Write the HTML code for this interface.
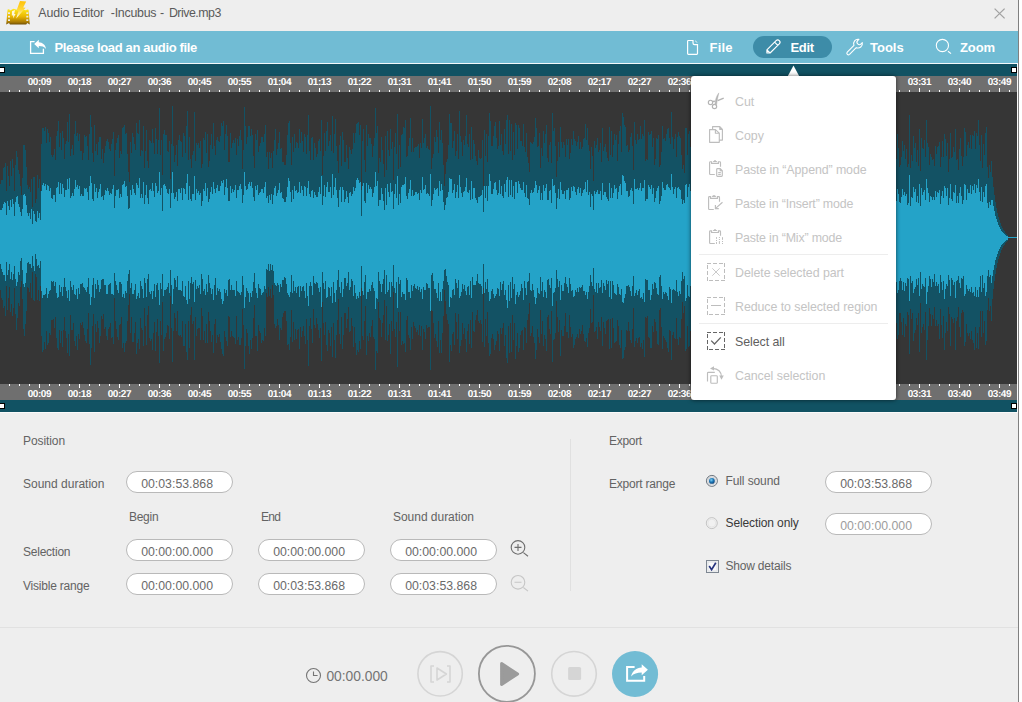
<!DOCTYPE html>
<html><head><meta charset="utf-8"><title>Audio Editor</title>
<style>
*{box-sizing:border-box;margin:0;padding:0}
html,body{width:1022px;height:702px;overflow:hidden;background:#fff;font-family:"Liberation Sans",sans-serif;}
#win{position:absolute;left:0;top:0;width:1018px;height:702px;background:#eee;overflow:hidden}
#edge{position:absolute;left:1018px;top:0;width:1px;height:702px;background:#808080}
.abs{position:absolute}
svg{position:absolute;overflow:visible}
.tt{position:absolute;top:5px;font-size:12.4px;line-height:16px;color:#5a5a5a;white-space:pre}
#toolbar{position:absolute;left:0;top:31px;width:1018px;height:32px;background:#71bcd4}
#tbline{position:absolute;left:0;top:63px;width:1018px;height:1px;background:#f3f9fb}
.tb{position:absolute;color:#fff;font-weight:bold;font-size:13px;line-height:16px;white-space:pre;top:40px}
#pill{position:absolute;left:753px;top:36px;width:79px;height:22px;border-radius:11px;background:#3d8ca8}
#panel{position:absolute;left:0;top:64px;width:1017px;height:348px;background:#115263}
#panelr{position:absolute;left:1017px;top:63px;width:1px;height:350px;background:#fafafa}
#panelb{position:absolute;left:0;top:412px;width:1018px;height:1px;background:#fafafa}
.ruler{position:absolute;left:0;width:1017px;height:16px;background-color:#6f6f6f;overflow:hidden}
#r1{top:12px;background-image:linear-gradient(90deg,transparent 39px,#fff 39px),linear-gradient(90deg,transparent 9px,#fff 9px);background-size:40px 4px,10px 2px;background-repeat:repeat-x;background-position:0 bottom,0 bottom}
#r2{top:320px;background-image:linear-gradient(90deg,transparent 39px,#fff 39px),linear-gradient(90deg,transparent 9px,#fff 9px);background-size:40px 4px,10px 2px;background-repeat:repeat-x;background-position:0 top,0 top}
.rl{position:absolute;width:40px;text-align:center;color:#fff;font-weight:bold;font-size:10px;line-height:10px;letter-spacing:-0.45px;text-rendering:geometricPrecision}
#r1 .rl{top:2px}
#r2 .rl{top:6px}
#wave{position:absolute;left:0;top:28px;width:1017px;height:292px;background:#363636}
.hd{position:absolute;width:6px;height:6px;background:#fff;border:1px solid #000}
#menu{position:absolute;left:691px;top:76px;width:205px;height:324px;background:#fff;border-radius:3px;box-shadow:0 0 4px rgba(0,0,0,.6)}
.mi{position:absolute;left:735px;font-size:12.4px;line-height:16px;color:#c4c4c4;white-space:pre}
.mi.on{color:#5e5e5e}
.sep{position:absolute;left:699px;width:189px;height:1px;background:#ededed}
.lb{position:absolute;font-size:12px;line-height:16px;color:#636363;white-space:pre}
.inp{position:absolute;width:107px;height:22px;border:1px solid #b9b9b9;border-radius:11px;background:#fff;font-size:12.3px;line-height:20px;text-align:left;color:#6a6a6a;padding:2px 0 0 14.2px;white-space:pre}
#vdiv{position:absolute;left:570px;top:439px;width:1px;height:152px;background:#e0e0e0}
#hdiv{position:absolute;left:0;top:627px;width:1018px;height:1px;background:#e1e1e1}
.g{fill:none;stroke:#bdbdbd;stroke-width:1.15}
</style></head><body>
<div id="win">
<!-- title bar -->
<svg style="left:0;top:0" width="40" height="30" viewBox="0 0 40 30">
<defs>
<linearGradient id="gold" x1="0" y1="0" x2="0" y2="1"><stop offset="0" stop-color="#ffea20"/><stop offset=".5" stop-color="#e9b602"/><stop offset=".85" stop-color="#a87a05"/><stop offset="1" stop-color="#6e4e04"/></linearGradient>
<linearGradient id="bolt" x1="0" y1="0" x2="0" y2="1"><stop offset="0" stop-color="#ffc107"/><stop offset=".5" stop-color="#ffd83a"/><stop offset="1" stop-color="#fffdf0"/></linearGradient>
</defs>
<path d="M7.6,9.6 L9.2,9.3 L10,10.4 L13.5,8.7 L17,9.7 L21,9.2 L26,10.3 L27.2,9.4 L28.6,9.7 L29.8,24.4 L27.2,23 L26.2,24.5 L10,24.5 L9,23 L6.2,24.4 Z" fill="url(#gold)"/>
<path d="M20,1 L26.2,1.4 L23.2,7.4 L25.6,7.8 L16.2,18.4 L18.6,10.6 L16.6,10.2 Z" fill="url(#bolt)"/>
<path d="M12,11.2 L15,10 L14.2,14 L15.6,14 L13,18.6 L13.3,15.6 L11.8,15.6 Z" fill="#fff" opacity=".85"/>
<g fill="#ececec"><rect x="8" y="12.3" width="2" height="1.7"/><rect x="8" y="15.8" width="2" height="1.7"/><rect x="8" y="19.3" width="2" height="1.7"/><rect x="26.3" y="12.3" width="2" height="1.7"/><rect x="26.3" y="15.8" width="2" height="1.7"/><rect x="26.3" y="19.3" width="2" height="1.7"/></g>
</svg>
<div class="tt" style="left:38.3px;letter-spacing:-0.151px">Audio Editor</div><div class="tt" style="left:110.8px;letter-spacing:-0.266px">-Incubus</div><div class="tt" style="left:160.1px;letter-spacing:0.359px">-</div><div class="tt" style="left:168.9px;letter-spacing:-0.508px">Drive.mp3</div>
<svg style="left:985px;top:2px" width="30" height="26" viewBox="985 2 30 26"><path d="M994.6,8.6 L1004.6,18.4 M1004.6,8.6 L994.6,18.4" stroke="#a2a2a2" stroke-width="1.3" fill="none"/></svg>

<!-- toolbar -->
<div id="toolbar"></div>
<div id="pill"></div>
<svg style="left:0;top:31px" width="1018" height="32" viewBox="0 31 1018 32" fill="none" stroke="#fff" stroke-width="1.2">
 <!-- load -->
 <path d="M34.6,41.6 H30.6 V53.4 H43.4 V48.8" stroke-width="1.3"/>
 <path d="M34.2,44 L38.8,39.8 V42.2 C42.6,42.4 45.6,44.8 46,49 C44.2,46.6 42,46 38.8,46 V48.2 Z" fill="#fff" stroke="none"/>
 <!-- file -->
 <path d="M688.4,40.5 H693 V43 Q693,44.6 694.6,44.6 H697.5 V53.6 Q697.5,54.4 696.7,54.4 H688.4 Q687.6,54.4 687.6,53.6 V41.3 Q687.6,40.5 688.4,40.5 Z"/>
 <path d="M695,40.1 Q695.2,42.8 697.9,43 Z" fill="#fff" stroke="none"/>
 <!-- pencil -->
 <path d="M766.9,53 L766.9,49.8 L776.1,40.6 A2.26,2.26 0 0 1 779.3,43.8 L770.1,53 Z M766.9,49.8 L770.1,53 M774.6,42.1 L777.8,45.3" stroke-width="1.15" stroke-linejoin="round"/>
 <!-- wrench -->
 <path d="M858.9,39.3 L857.7,40.5 A2.4,2.4 0 0 0 861.1,43.9 L862.3,42.7 A4.4,4.4 0 0 1 856.23,47.63 L849.53,54.33 A1.6,1.6 0 0 1 847.27,52.07 L853.97,45.37 A4.4,4.4 0 0 1 858.9,39.3 Z" stroke-width="1.1" stroke-linejoin="round"/>
 <!-- zoom -->
 <circle cx="942.4" cy="45.5" r="6.1" stroke-width="1.1"/><path d="M948,51.2 L951,53.6" stroke-width="1.2"/>
</svg>
<div class="tb" style="left:54.5px;letter-spacing:-0.34px">Please load an audio file</div>
<div class="tb" style="left:709.5px;letter-spacing:0.2px">File</div>
<div class="tb" style="left:790.5px;letter-spacing:-0.3px">Edit</div>
<div class="tb" style="left:870px">Tools</div>
<div class="tb" style="left:960px;letter-spacing:-0.1px">Zoom</div>
<div id="tbline"></div>

<!-- wave panel -->
<div id="panel">
 <div class="ruler" id="r1"><div class="rl" style="left:19.4px">00:09</div><div class="rl" style="left:59.4px">00:18</div><div class="rl" style="left:99.4px">00:27</div><div class="rl" style="left:139.4px">00:36</div><div class="rl" style="left:179.4px">00:45</div><div class="rl" style="left:219.4px">00:55</div><div class="rl" style="left:259.4px">01:04</div><div class="rl" style="left:299.4px">01:13</div><div class="rl" style="left:339.4px">01:22</div><div class="rl" style="left:379.4px">01:31</div><div class="rl" style="left:419.4px">01:41</div><div class="rl" style="left:459.4px">01:50</div><div class="rl" style="left:499.4px">01:59</div><div class="rl" style="left:539.4px">02:08</div><div class="rl" style="left:579.4px">02:17</div><div class="rl" style="left:619.4px">02:27</div><div class="rl" style="left:659.4px">02:36</div><div class="rl" style="left:699.4px">02:45</div><div class="rl" style="left:739.4px">02:54</div><div class="rl" style="left:779.4px">03:03</div><div class="rl" style="left:819.4px">03:13</div><div class="rl" style="left:859.4px">03:22</div><div class="rl" style="left:899.4px">03:31</div><div class="rl" style="left:939.4px">03:40</div><div class="rl" style="left:979.4px">03:49</div></div>
 <div id="wave"><svg width="1017" height="292" viewBox="0 0 1017 292" shape-rendering="crispEdges" style="left:0;top:0"><path d="M0,146V92H1V88H2H3V76H4V75H5V71H6V99H7V74H8V84H9V94H10V69H11V84H12V67H13V76H14V99H15V73H16V59H17V65H18V78H19V82H20V94H21V103H22V86H23V53H24H25V58H26V75H27V93H28V97H29V95H30V100H31V87H32V115H33V85H34H35V111H36V107H37V83H38V96H39V87H40V99H41V52H42V36H43H44V39H45V35H46V51H47V37H48V41H49V50H50V45H51V63H52V65H53V63H54V57H55V68H56V44H57V39H58V29H59V55H60V41H61V58H62V39H63V46H64V67H65V52H66V49H67V30H68V50H69V22H70V64H71V57H72V53H73V63H74V42H75V29H76V44H77V41H78V49H79V42H80V59H81H82V68H83V61H84V43H85V45H86V44H87V54H88V68H89V42H90V23H91V35H92V61H93V70H94V33H95V59H96V52H97V63H98V50H99V45H100H101V67H102V57H103V71H104V61H105V54H106V49H107V47H108V50H109V57H110V59H111V52H112V47H113V40H114V84H115V58H116V51H117V46H118V43H119V66H120V59H121V62H122V36H123V35H124V33H125V42H126V41H127V62H128V80H129V90H130V50H131V61H132V41H133V45H134V52H135V58H136V31H137V41H138V42H139V28H140V64H141V58H142V59H143V34H144V76H145V59H146V38H147V69H148V76H149V48H150V49H151V51H152V37H153V51H154V62H155V36H156V47H157V62H158V48H159V16H160V63H161V48H162V83H163V42H164V38H165V43H166H167V59H168V60H169V49H170V87H171V52H172V14H173V54H174V70H175V63H176V53H177V74H178V48H179V43H180V49H181V50H182V65H183V41H184V44H185V61H186V34H187V19H188V68H189V45H190V67H191V76H192V63H193V59H194V20H195V69H196V51H197V53H198V51H199V56H200V49H201V76H202V72H203V46H204V48H205V40H206V61H207V42H208V75H209V69H210V53H211V42H212V57H213V31H214V54H215V63H216V48H217V45H218V49H219V50H220V44H221V31H222V34H223V29H224V58H225V42H226V33H227V44H228V70H229H230V41H231V56H232V51H233V48H234V51H235V46H236V63H237V47H238V54H239V44H240V38H241V48H242V77H243V58H244V15H245V34H246V52H247V45H248V34H249H250V44H251V37H252V43H253V64H254V76H255V42H256V48H257V38H258V60H259V54H260V51H261V45H262H263V50H264V42H265V33H266V65H267V60H268V77H269V60H270V66H271V61H272V76H273V59H274V48H275V37H276V63H277V57H278V51H279V40H280V57H281V56H282V70H283H284V73H285H286V63H287V43H288V31H289V29H290V51H291V73H292V45H293V60H294V42H295V56H296V50H297V51H298V56H299V37H300V51H301V40H302V49H303V60H304V42H305V45H306V62H307V43H308V23H309V59H310V68H311V46H312V45H313V68H314V51H315V56H316V65H317V62H318V49H319V47H320V59H321V28H322V83H323V64H324V41H325V59H326V39H327V30H328V54H329V49H330V43H331V59H332V24H333V61H334V42H335V27H336V54H337V69H338V81H339V53H340V44H341V74H342V40H343V48H344V70H345H346V53H347V66H348V77H349V55H350V58H351V62H352V57H353V41H354V51H355V41H356V32H357V31H358V30H359V43H360V33H361V98H362V49H363V37H364V68H365V80H366V33H367V54H368V42H369V46H370H371V52H372V65H373V54H374V46H375V16H376V41H377V34H378V81H379V66H380V70H381V45H382V58H383V72H384V85H385V44H386V78H387V39H388V58H389V64H390V37H391V57H392V50H393V88H394V55H395V41H396V62H397V22H398V77H399V53H400V75H401V43H402V42H403V35H404V36H405V28H406V65H407V64H408V54H409V46H410V26H411V60H412V46H413V60H414V56H415V55H416H417V54H418V52H419V66H420V51H421V56H422V27H423V51H424V46H425V42H426V56H427V54H428V57H429V58H430V14H431V77H432V66H433V62H434V45H435V50H436V38H437V45H438V61H439V30H440V48H441V38H442V51H443V73H444V94H445V82H446V70H447V67H448V53H449V22H450V31H451H452V56H453V49H454V39H455V64H456V59H457V42H458V67H459V19H460V44H461V50H462V64H463V48H464V53H465V44H466V23H467V52H468V55H469V42H470V68H471V35H472V67H473V48H474V52H475V64H476V69H477V73H478V58H479V66H480V67H481V66H482V48H483V94H484V38H485V64H486V42H487V70H488V44H489V21H490V29H491V54H492H493V44H494V34H495V30H496V46H497V57H498V54H499V29H500V53H501V42H502V59H503V63H504V37H505V52H506V28H507V23H508V62H509V28H510V59H511V32H512V68H513V40H514V63H515V31H516V33H517V57H518V33H519V36H520V49H521H522V54H523V32H524V55H525V60H526V41H527V65H528V71H529V80H530V50H531V51H532V52H533V50H534V45H535V26H536V36H537V55H538V54H539V41H540V76H541V56H542V64H543V39H544V51H545V42H546V33H547V66H548V70H549V53H550V50H551V71H552V21H553V39H554V36H555V54H556V85H557V69H558V50H559V65H560V35H561V50H562V56H563V50H564V53H565V65H566V47H567V53H568V47H569V67H570V61H571V47H572V53H573V39H574V47H575V49H576V54H577V50H578V44H579V57H580V50H581V57H582V55H583V47H584V46H585V32H586V48H587V36H588V53H589V59H590V77H591V55H592V64H593V89H594V49H595V56H596V53H597V46H598V60H599V58H600V51H601V70H602V36H603V59H604V55H605V52H606V60H607V66H608V69H609V35H610V63H611V39H612V65H613V53H614V42H615V48H616V43H617V69H618V52H619V39H620V34H621V60H622V21H623V25H624V33H625V35H626V54H627V53H628V60H629V58H630V45H631V41H632V54H633V78H634V30H635V48H636V52H637V42H638V48H639V47H640V34H641V47H642V42H643V44H644V28H645V69H646V67H647V68H648V40H649V43H650V42H651V39H652V55H653V46H654V73H655V67H656V46H657V47H658V43H659V75H660V73H661V60H662V34H663V47H664V46H665V49H666V42H667V37H668V36H669V46H670V52H671V20H672V45H673V57H674V47H675V42H676V65H677V45H678V40H679V44H680V46H681V63H682V77H683V73H684V81H685V36H686H687V63H688V42H689V39H690V55H691V43H692V32H693V41H694V46H695V55H696V46H697V65H698V75H699V29H700V21H701V46H702V31H703V46H704V49H705V69H706V52H707V42H708V23H709V57H710V63H711V86H712V68H713V48H714V32H715V62H716V59H717V43H718V73H719V52H720V62H721V40H722V41H723V74H724V71H725V49H726V53H727V29H728V53H729V43H730V33H731V64H732V85H733V79H734V68H735V36H736V47H737V46H738V52H739V51H740V62H741V53H742V56H743V68H744V48H745V47H746V53H747V45H748V49H749V86H750V62H751V53H752V87H753V63H754V68H755V46H756V47H757V43H758V35H759V43H760V75H761V79H762V43H763V48H764V42H765V69H766V49H767V66H768V42H769V48H770V50H771V58H772V51H773V28H774V56H775V81H776V65H777V63H778V49H779V87H780V61H781V74H782V80H783V64H784V38H785V33H786V43H787V44H788V61H789V50H790V62H791V39H792V29H793V50H794V44H795V63H796V52H797V39H798V50H799V42H800V62H801V46H802H803V56H804V66H805V45H806V46H807V55H808V53H809V44H810V34H811V44H812V82H813V54H814V35H815V37H816V40H817V54H818V46H819V45H820V38H821V43H822V32H823V41H824V51H825V37H826V32H827V42H828V64H829V50H830V58H831V63H832V47H833V57H834V18H835V43H836V44H837V49H838V43H839V62H840V20H841V66H842V65H843V38H844V62H845V77H846V58H847V59H848V40H849V65H850V30H851V39H852V56H853V43H854V49H855V34H856V38H857V69H858V67H859V49H860V69H861V35H862V50H863V43H864V64H865V65H866V58H867V50H868V45H869V33H870V63H871V53H872V73H873V52H874V33H875V42H876V46H877V47H878V62H879V79H880V46H881V51H882V49H883V55H884V34H885V44H886V47H887V45H888V68H889V42H890V71H891V58H892V71H893V75H894V44H895V50H896V67H897V42H898V56H899V75H900V73H901V65H902V49H903V59H904V53H905V67H906V57H907V75H908V72H909V23H910V76H911V63H912V69H913V44H914V56H915V51H916V70H917V58H918V74H919V37H920V79H921V46H922V56H923V57H924V48H925V65H926V28H927V51H928V55H929V73H930V62H931V65H932V68H933V67H934V74H935V54H936V62H937V55H938V54H939V50H940V75H941V65H942V49H943V65H944V42H945V47H946V64H947V51H948V80H949V67H950V41H951V66H952V65H953V55H954V60H955V37H956V68H957V67H958V78H959V57H960V46H961V64H962V74H963V65H964V36H965V40H966V64H967V53H968V50H969V56H970V43H971V57H972V43H973V44H974V39H975V57H976V41H977V44H978V28H979V53H980V69H981V43H982V76H983V52H984V63H985V41H986V35H987V75H988V86H989V73H990V80H991V69H992V85H993V95H994V103H995V110H996V116H997V121H998V125H999V128H1000V131H1001V134H1002V136H1003V138H1004V139H1005V141H1006V142H1007V143H1008V146H1009H1010H1011H1012H1013H1014H1015H1016H1017V146V146H1016H1015H1014H1013H1012H1011H1010H1009H1008V149H1007V150H1006V151H1005V153H1004V154H1003V156H1002V158H1001V161H1000V164H999V167H998V171H997V176H996V182H995V189H994V197H993V207H992V229H991V214H990V219H989V206H988V218H987V249H986V253H985V229H984V241H983V219H982V245H981V219H980V235H979V257H978V241H977V256H976V235H975V258H974V251H973V248H972V239H971V247H970V241H969V244H968V241H967V232H966V250H965V254H964V220H963V218H962V221H961V245H960V235H959V215H958V225H957V229H956V258H955V226H954V231H953V227H952V225H951V254H950V222H949V215H948V239H947V230H946V241H945V258H944V224H943V246H942V233H941V217H940V247H939V232H938V234H937V228H936V234H935V215H934V227H933V223H932V234H931V222H930V216H929V234H928V248H927V268H926V220H925V238H924V232H923V235H922V241H921V211H920V260H919V221H918V233H917V226H916V238H915V241H914V249H913V221H912V227H911V217H910V262H909V223H908V220H907V234H906V232H905V245H904V226H903V243H902V230H901V221H900H899V243H898V247H897V231H896V241H895V252H894V222H893H892V236H891V218H890V242H889V226H888V241H887V246H886V251H885H884V246H883V244H882V247H881V249H880V214H879V237H878V249H877V245H876V251H875V253H874V239H873V214H872V232H871V228H870V265H869V253H868V236H867V233H866V227H865V233H864V251H863V242H862V265H861V228H860V245H859V226H858V221H857V260H856V262H855V237H854V250H853V237H852V256H851V262H850V235H849V253H848V230H847V231H846V216H845V231H844V256H843V226H842V225H841V271H840V228H839V248H838V242H837V243H836H835V267H834V230H833V240H832V227H831V232H830V238H829V232H828V253H827V257H826V262H825V245H824V253H823V256H822V250H821V253H820V242H819V248H818V237H817V246H816V251H815V254H814V239H813V211H812V243H811V268H810V247H809V244H808V241H807V254H806V244H805V227H804V239H803V252H802V251H801V232H800V260H799V247H798V251H797V236H796V229H795V246H794V248H793V259H792V252H791V226H790V247H789V229H788V244H787V248H786V258H785V254H784V227H783V212H782V215H781V228H780V207H779V242H778V235H777V226H776V215H775V241H774V262H773V247H772V233H771V241H770V248H769V250H768V223H767V240H766V221H765V246H764V247H763V254H762V215H761V216H760V246H759V251H758V250H757V249H756V246H755V228H754V230H753V209H752V247H751V235H750V203H749V243H748V253H747V234H746V243H745V253H744V220H743V244H742V235H741V236H740V247H739V238H738V246H737V240H736V254H735V229H734V216H733V203H732V225H731V269H730V241H729V244H728V264H727V242H726V238H725V227H724V217H723V252H722H721V226H720V246H719V221H718V254H717V228H716V233H715V254H714V242H713V222H712V207H711V228H710V233H709V271H708V253H707V239H706V225H705V241H704V246H703V266H702V247H701V270H700V263H699V219H698V228H697V246H696V237H695V251H694V248H693V260H692V251H691V239H690V254H689V255H688V234H687V257H686V259H685V214H684V221H683V210H682V227H681V246H680V245H679V253H678V247H677V226H676V247H675V246H674V240H673V243H672V268H671V239H670V238H669V260H668V256H667V250H666V248H665V246H664V244H663V257H662V235H661V216H660V218H659V253H658V252H657V239H656V230H655V227H654V240H653V234H652V256H651H650V246H649V245H648V224H647V226H646V225H645V265H644V248H643V257H642V251H641V255H640V245H639V246H638V251H637V246H636V249H635V255H634V216H633V237H632V251H631V248H630V239H629V230H628V239H627V238H626V255H625V258H624V266H623V267H622V238H621V256H620V253H619V234H618V228H617V249H616V250H615V251H614V236H613V226H612V256H611V227H610V257H609V227H608V228H607V229H606V242H605V236H604V230H603V254H602V225H601V239H600V235H599V230H598V247H597V235H596V239H595V240H594V203H593V230H592V231H591V217H590V236H589V241H588V255H587V246H586V250H585V249H584V242H583V233H582V239H581V242H580V237H579V246H578V242H577V245H576V247H575V253H574V256H573V242H572V245H571V235H570V223H569V246H568V240H567H566V221H565V234H564V244H563H562V238H561V264H560V228H559V240H558V225H557V209H556V241H555V247H554V248H553V270H552V219H551V242H550V237H549V223H548V225H547V259H546V247H545V243H544V254H543V229H542V242H541V218H540V251H539V245H538V237H537V258H536V267H535V251H534V245H533V234H532V241H531V244H530V211H529V222H528V228H527V251H526V236H525V235H524V258H523V238H522V239H521V243H520V256H519V260H518V241H517V254H516V267H515V231H514V248H513V223H512V260H511V231H510V261H509V234H508V271H507V266H506V243H505V254H504V231H503V236H502V242H501V236H500V259H499V242H498V239H497V249H496V253H495V258H494V247H493V242H492V246H491V262H490V264H489V251H488V220H487V244H486V227H485V255H484V196H483V250H482V232H481V228H480V231H479V229H478V218H477V223H476V228H475V240H474V239H473V220H472V256H471V228H470V252H469V232H468V239H467V260H466V247H465V236H464V242H463V231H462V248H461V254H460V261H459V222H458V247H457V230H456V221H455V253H454V240H453V242H452V259H451V253H450V270H449V232H448V228H447V222H446V209H445V198H444V224H443V241H442V261H441V248H440V261H439V229H438V255H437V249H436V242H435V246H434V231H433V219H432V218H431V278H430V235H429H428V236H427V233H426V247H425V240H424V237H423V258H422V234H421V244H420V233H419V243H418V238H417V240H416V236H415V234H414V230H413V247H412V235H411V258H410V246H409V243H408V224H407V228H406V260H405V251H404V252H403V249H402V253H401V220H400V239H399V220H398V275H397V230H396V245H395V237H394V200H393V239H392V229H391V262H390V232H389V243H388V249H387V214H386V248H385V208H384V223H383V231H382V245H381V228H380V226H379V210H378V261H377V259H376V278H375V247H374V245H373V228H372V234H371V245H370V241H369V249H368V244H367V263H366V214H365V229H364V248H363V244H362V196H361V257H360V249H359V260H358V258H357V263H356V251H355V235H354V255H353V234H352V226H351V239H350V240H349V215H348V227H347V236H346V221H345H344V243H343V257H342V225H341V252H340V242H339V207H338V228H337V243H336V266H335V248H334V231H333V265H332V235H331V254H330V241H329V238H328V259H327V253H326V230H325V243H324V231H323V210H322V269H321V236H320V246H319V238H318V232H317V226H316V236H315V233H314V217H313V251H312V237H311V226H310V234H309V274H308V248H307V227H306V252H305V244H304V234H303V239H302V245H301V235H300V257H299V237H298V238H297V247H296V237H295V248H294V230H293V250H292V218H291V245H290V258H289V252H288V253H287V229H286V219H285H284V221H283V225H282V238H281V236H280V248H279V233H278V227H277V234H276V236H275V232H274V203H273V193H272V206H271V197H270V204H269V195H268V205H267V201H266V244H265V236H264V249H263V248H262V251H261V241H260V239H259V233H258V259H257V244H256H255V213H254V226H253V246H252V257H251V248H250V262H249V254H248V241H247V237H246V254H245V277H244V233H243V217H242V246H241V253H240H239V245H238V248H237V224H236V252H235V246H234V245H233V244H232V239H231V245H230V225H229V224H228V254H227V249H226V245H225V239H224V264H223V262H222V257H221V250H220V242H219V245H218V243H217V251H216V227H215V232H214V261H213V243H212V250H211V239H210V229H209V220H208V251H207V232H206V251H205V239H204V248H203V224H202V216H201V248H200V236H199H198V237H197V244H196V225H195V268H194V229H193V232H192V215H191V223H190V256H189V229H188V268H187V260H186V232H185V254H184H183V229H182V245H181V243H180V244H179V243H178V219H177V239H176V226H175V221H174V239H173V270H172V236H171V204H170V247H169V234H168V233H167V241H166V245H165V247H164V259H163V210H162V243H161V229H160V271H159V244H158V227H157V240H156V259H155V230H154V241H153V258H152V247H151V249H150V246H149V214H148V223H147V253H146V234H145V216H144V254H143V238H142V236H141V226H140V257H139V247H138V251H137V262H136V230H135V241H134V250H133H132V225H131V241H130V202H129V213H128V229H127V249H126V251H125V260H124V251H123V256H122V225H121V232H120V233H119V248H118V245H117V237H116V229H115V206H114V252H113V245H112V246H111V231H110V235H109V237H108V248H107V244H106V235H105V237H104V222H103V227H102V224H101V244H100V251H99V236H98V229H97V240H96V232H95V260H94V222H93V234H92V256H91V273H90V252H89V221H88V237H87V251H86V249H85V243H84V236H83V230H82V233H81V231H80V247H79V242H78V258H77V244H76V254H75V249H74V231H73V238H72H71V223H70V264H69V242H68V261H67V246H66V239H65V225H64V238H63V255H62V239H61V251H60V238H59V258H58V256H57V246H56V225H55V236H54V227H53V228H52H51V243H50V241H49V251H48V253H47V239H46V257H45V250H44V258H43V260H42V244H41V194H40V209H39V198H38V208H37V185H36V182H35V209H34V208H33V180H32V206H31V191H30V200H29V196H28V195H27V219H26V232H25V244H24V237H23V207H22V189H21V195H20V214H19V211H18V226H17V238H16V222H15V196H14V216H13V224H12V212H11V220H10V195H9V206H8V218H7V194H6V224H5V214H4V216H3V208H2V206H1V198H0Z" fill="#135264"/><path d="M0,146V118H1H2V116H3V112H4V110H5V111H6V123H7V109H8V114H9V118H10V108H11V115H12V107H13V112H14V124H15V110H16V105H17V104H18V112H19V115H20V120H21V124H22V117H23V103H24V102H25V104H26V113H27V121H28V124H29V121H30V127H31V117H32V132H33V119H34V122H35V129H36V130H37V119H38V126H39V121H40V128H41V99H42V93H43V91H44V94H45V92H46V98H47V93H48V94H49V99H50V96H51V106H52V107H53V103H54H55V110H56V96H57V95H58V90H59V102H60V91H61V102H62V92H63V96H64V105H65V98H66H67V87H68V97H69V86H70V106H71V104H72V101H73V104H74V97H75V88H76V95H77V93H78V97H79V94H80V104H81V102H82V104H83H84V96H85V97H86V96H87V100H88V108H89V94H90V84H91V91H92V107H93V109H94V92H95V100H96V96H97V106H98V100H99V97H100V92H101V105H102V104H103V108H104V103H105V98H106V99H107V96H108V99H109V103H110V101H111V102H112V97H113V93H114V116H115V104H116V98H117H118V97H119V106H120V102H121V105H122V93H123V92H124V89H125V95H126V94H127V104H128V117H129V116H130V98H131V103H132V93H133V97H134V101H135V103H136V91H137V93H138V96H139V86H140V106H141V102H142V106H143V90H144V112H145V103H146V93H147V106H148V112H149V98H150V97H151V99H152V91H153V99H154V105H155V91H156V94H157V101H158V99H159V80H160V103H161V96H162V119H163V93H164V92H165V94H166V97H167V101H168V102H169V97H170V116H171V101H172V80H173V101H174V107H175V105H176V100H177V109H178V97H179H180V101H181V96H182V108H183V96H184V97H185V102H186V91H187V82H188V108H189V94H190V107H191V109H192V102H193H194V84H195V108H196V97H197V101H198V99H199V103H200V101H201V114H202V109H203V97H204V99H205V91H206V104H207V96H208V110H209V107H210V100H211V95H212V102H213V90H214V97H215V101H216V96H217V93H218V99H219H220V94H221V89H222V91H223V88H224V103H225V95H226V87H227V96H228V109H229H230V94H231V101H232V97H233V100H234V98H235V93H236V106H237V98H238H239V94H240V92H241V97H242V111H243V103H244V80H245V94H246V98H247V97H248V92H249V90H250V94H251V90H252V96H253V105H254V109H255V94H256V98H257V93H258V103H259V101H260V100H261V97H262H263V101H264V95H265V90H266V106H267V104H268V111H269V103H270V108H271V102H272V112H273V103H274V96H275V94H276V104H277V101H278V98H279V91H280V101H281V100H282V106H283V107H284V110H285H286V105H287V95H288V86H289V89H290V100H291V110H292V98H293V107H294V94H295V99H296V98H297V101H298V100H299V90H300V101H301V94H302V98H303V104H304V94H305V95H306V104H307V96H308V89H309V102H310V105H311V99H312V98H313V106H314V100H315V103H316V105H317H318V100H319V95H320V102H321V84H322V113H323V104H324V93H325V105H326V95H327V90H328V100H329H330V95H331V106H332V82H333V103H334V95H335V86H336V98H337V106H338V115H339V98H340V95H341V110H342V95H343V98H344V110H345V107H346V99H347V105H348V111H349V101H350V100H351V104H352V102H353V95H354V99H355V96H356V88H357V86H358V88H359V91H360V90H361V124H362V94H363V91H364V109H365V111H366V91H367V101H368V93H369V97H370V95H371V97H372V105H373V101H374V95H375V80H376V94H377V89H378V114H379V108H380H381V96H382V102H383V109H384V118H385V96H386V113H387V92H388V100H389V105H390V91H391V100H392V99H393V117H394V102H395V92H396V106H397V84H398V113H399V102H400V111H401V95H402V93H403H404V92H405V85H406V104H407V107H408V101H409V97H410V88H411V104H412V98H413V104H414V103H415V100H416H417V102H418V101H419V108H420V98H421V101H422V85H423V98H424V97H425V93H426V102H427V101H428V102H429V104H430V82H431V114H432V108H433V102H434V96H435V98H436V97H437V96H438V104H439V89H440V99H441V92H442V98H443V110H444V118H445V113H446V106H447V105H448V100H449V86H450V87H451H452V101H453V98H454V92H455V106H456V100H457V93H458V106H459V83H460V95H461V101H462V105H463V100H464V99H465V95H466V86H467V100H468V101H469V98H470V108H471V89H472V107H473V96H474H475V106H476V108H477V111H478V105H479H480V104H481V103H482V98H483V120H484V94H485V106H486V94H487V109H488V94H489V82H490V89H491V102H492H493V97H494V91H495V90H496V98H497V103H498V101H499V88H500V102H501V94H502V104H503V106H504V92H505V100H506V88H507V85H508V105H509V88H510V103H511V88H512V105H513V94H514V107H515V90H516H517V101H518V89H519V92H520V96H521V98H522H523V90H524V101H525V105H526V93H527V106H528V107H529V113H530V101H531V98H532V101H533V100H534V96H535V89H536V93H537V101H538V98H539V94H540V108H541V101H542V108H543V93H544V99H545V96H546V92H547V108H548H549V99H550V98H551V111H552V87H553V94H554V93H555V101H556V117H557V106H558V97H559V107H560V90H561V98H562V102H563H564V99H565V107H566V98H567H568V96H569V108H570V106H571V95H572V99H573V94H574V95H575V100H576V103H577V97H578V95H579V101H580V96H581V104H582V101H583V98H584V97H585V90H586V100H587V88H588V103H589V100H590V115H591V102H592V104H593V118H594V99H595V102H596V100H597V98H598V102H599H600V99H601V108H602V91H603V103H604V100H605H606V105H607V107H608V109H609V91H610V106H611V96H612V106H613V101H614V93H615V97H616V96H617V107H618V100H619V94H620V92H621V103H622V83H623V84H624V89H625V91H626V99H627H628V105H629V104H630V98H631V96H632V99H633V112H634V87H635V97H636H637V96H638V98H639V96H640V91H641V99H642V96H643H644V88H645V109H646V107H647H648V93H649V95H650V97H651V93H652V102H653V96H654V110H655V106H656V99H657V96H658V94H659V112H660V109H661V104H662V90H663V96H664V98H665H666V93H667V92H668V95H669V96H670V98H671V82H672V95H673V102H674V97H675V95H676V106H677V96H678V95H679V97H680V98H681V107H682V112H683V108H684V111H685V93H686V92H687V105H688V95H689V92H690V99H691V92H692V91H693V93H694V96H695V100H696V96H697V107H698V111H699V85H700V86H701V96H702V88H703V97H704V99H705V108H706V99H707V93H708V85H709V102H710V108H711V117H712V109H713V96H714V92H715V107H716V102H717V98H718V106H719V100H720V104H721V94H722V96H723V109H724V110H725V96H726V99H727V86H728V97H729V95H730V90H731V105H732V117H733V114H734V107H735V88H736V101H737V95H738V99H739V100H740V104H741V101H742V102H743V110H744V97H745V99H746V101H747V96H748V98H749V116H750V103H751V98H752V114H753V102H754V109H755V96H756H757V99H758V93H759V94H760V109H761V111H762V96H763H764H765V109H766V98H767V106H768V96H769H770V98H771V100H772H773V88H774V99H775V115H776V107H777V103H778V97H779V118H780V103H781V109H782V112H783V107H784V92H785V89H786V94H787V97H788V105H789V102H790V106H791V92H792V88H793V99H794V97H795V103H796V101H797V92H798V99H799V93H800V106H801V98H802V99H803H804V106H805V97H806V99H807V103H808V97H809H810V92H811V94H812V114H813V98H814V93H815V90H816V92H817V103H818V94H819V97H820V92H821V95H822V88H823V94H824V100H825V95H826V90H827V95H828V105H829V99H830V102H831V104H832V96H833V102H834V82H835V95H836V93H837V98H838V93H839V104H840V87H841V107H842H843V93H844V104H845V114H846V103H847H848V94H849V105H850V89H851V96H852V99H853V98H854V100H855V91H856V93H857V109H858V105H859V101H860V109H861V91H862V99H863V93H864V103H865V105H866V103H867V100H868V98H869V91H870V101H871H872V110H873V100H874V90H875V96H876V98H877V96H878V105H879V114H880V94H881V100H882H883V99H884V91H885V96H886V95H887V101H888V109H889V96H890V110H891V104H892V109H893V110H894V92H895V98H896V109H897V97H898V102H899V110H900V111H901V105H902V97H903V103H904V100H905V104H906V102H907V113H908V111H909V83H910V114H911V105H912V106H913V95H914V100H915V97H916V110H917V104H918V111H919V92H920V114H921V96H922V103H923V100H924V98H925V108H926V87H927V96H928V101H929V110H930V104H931V105H932V108H933V105H934V108H935V99H936V105H937V100H938V101H939V98H940V112H941V104H942V99H943V106H944V94H945V96H946V104H947V96H948V113H949V106H950V92H951V107H952V109H953V100H954V101H955V93H956V111H957V104H958V111H959V101H960V95H961V104H962V112H963V108H964V92H965V93H966V108H967V97H968V101H969H970V93H971V102H972V94H973V98H974V92H975V101H976V93H977V96H978V87H979V100H980V109H981V95H982V110H983V100H984V105H985V94H986V92H987V111H988V116H989V110H990V113H991V108H992H993V114H994V119H995V124H996V127H997V130H998V133H999V135H1000V137H1001V139H1002V140H1003V141H1004V142H1005V143H1006V144H1007H1008V146H1009H1010H1011H1012H1013H1014H1015H1016H1017V146V146H1016H1015H1014H1013H1012H1011H1010H1009H1008V148H1007H1006V149H1005V150H1004V151H1003V152H1002V153H1001V155H1000V157H999V159H998V162H997V165H996V168H995V173H994V178H993V184H992V191H991V183H990V185H989V178H988V184H987V200H986V204H985V191H984V196H983V183H982V200H981V184H980V195H979V205H978V198H977V205H976V195H975V204H974V200H973V201H972V195H971V200H970V197H969V199H968V197H967V193H966V202H965V204H964V184H963V187H962V186H961V196H960V191H959V184H958V188H957V189H956V206H955V190H954V193H953V188H952V186H951V204H950V188H949V183H948V194H947V192H946V197H945V207H944V189H943V198H942V190H941V183H940V201H939V192H938V194H937V190H936V194H935V182H934V190H933V187H932V195H931V187H930V184H929V194H928V200H927V212H926V186H925V195H924V194H923V192H922V197H921V180H920V204H919V186H918V193H917V187H916V195H915V197H914V201H913V189H912V191H911V184H910V209H909V187H908V186H907V194H906V191H905V199H904V190H903V198H902V189H901V186H900V189H899V198H898V201H897V190H896V197H895V202H894V185H893V187H892V193H891V185H890V198H889V188H888V198H887V201H886V204H885V200H884V198H883V199H882V200H881V202H880V182H879V201H878V202H877H876H875V205H874V196H873V183H872V194H871V188H870V210H869V203H868V195H867V193H866V189H865V194H864V204H863V197H862V209H861V188H860V201H859V189H858V186H857V205H856V208H855V194H854V203H853V196H852V205H851V209H850V194H849V204H848V193H847V190H846V184H845V192H844V206H843V189H842V187H841V212H840V188H839V199H838V198H837V195H836V197H835V213H834V192H833V196H832V190H831V192H830V194H829V193H828V202H827V205H826V209H825V200H824V202H823V203H822V200H821V205H820V197H819V202H818V195H817V199H816V202H815V204H814V196H813V181H812V198H811V212H810V200H809V197H808V198H807V203H806V197H805V188H804V197H803V202H802H801V189H800V206H799V202H798V201H797V195H796V191H795V198H794V199H793V206H792H791V188H790V198H789V188H788V197H787V201H786V208H785V203H784V189H783V180H782V183H781V188H780V177H779V199H778V196H777V188H776V182H775V196H774V210H773V200H772V193H771V198H770V200H769V202H768V188H767V197H766V186H765V200H764V198H763V205H762V184H761V186H760V199H759V202H758H757V204H756V197H755V190H754V192H753V181H752V197H751V193H750V178H749V197H748V204H747V191H746V199H745V203H744V188H743V201H742V191H741V194H740V202H739V194H738V199H737V196H736V204H735V189H734V183H733V176H732V188H731V212H730V195H729V199H728V207H727V196H726H725V188H724V185H723V203H722V201H721V188H720V201H719V186H718V205H717V189H716V196H715V205H714V197H713V187H712V179H711V191H710V192H709V212H708V202H707V196H706V187H705V197H704V198H703V212H702V199H701V212H700V208H699V188H698V190H697V199H696V192H695V203H694V201H693V205H692V201H691V194H690V205H689V204H688V193H687V206H686V209H685V184H684V187H683V180H682V189H681V202H680V199H679V204H678V200H677V188H676V199H675V198H674V197H673V198H672V211H671V197H670V195H669V208H668V204H667V201H666V200H665V202H664V200H663V207H662V194H661V183H660V185H659V203H658V202H657V196H656V191H655V190H654V197H653V192H652V203H651V208H650V198H649H648V188H647H646V187H645V210H644V201H643V207H642V205H641V206H640V197H639V199H638V203H637V198H636V201H635V204H634V184H633V194H632V204H631V199H630V195H629V193H628V194H627H626V202H625V206H624V211H623V210H622V197H621V203H620V202H619V195H618V192H617V203H616V202H615V201H614V193H613V189H612V207H611V189H610V205H609V189H608V192H607V188H606V198H605V194H604V191H603V201H602V188H601V195H600V196H599V191H598V201H597V191H596V200H595V197H594V176H593V194H592V190H591V183H590V194H589V200H588V207H587V200H586V203H585V199H584H583V193H582V195H581V196H580V195H579V200H578V196H577V200H576V198H575V204H574V205H573V198H572V199H571V192H570V186H569V201H568V195H567V192H566V185H565V191H564V199H563H562V193H561V208H560V189H559V195H558V187H557V178H556V196H555V200H554V201H553V214H552V186H551V196H550V193H549V187H548V188H547V206H546V200H545V198H544V205H543V190H542V199H541V185H540V202H539V201H538V196H537V206H536V212H535V205H534V198H533V192H532V199H531V198H530V181H529V189H528V190H527V203H526V196H525V189H524V208H523V196H522V192H521V199H520V203H519V205H518V200H517V203H516V212H515V192H514V197H513V185H512V206H511V190H510V209H509V193H508V216H507V208H506V198H505V203H504V189H503V192H502V198H501V190H500V204H499V197H498V196H497V202H496V204H495V206H494V202H493V197H492V199H491V207H490V209H489V200H488V187H487V197H486V190H485V201H484V172H483V202H482V194H481V192H480H479V191H478V182H477V189H476V193H475H474H473V185H472V206H471V189H470V203H469V194H468V195H467V203H466V199H465V193H464V197H463V192H462V200H461V204H460V206H459V188H458V196H457V191H456V187H455V203H454V197H453V198H452V206H451V205H450V215H449V193H448V190H447V184H446V177H445V178H444V189H443V197H442V209H441V200H440V209H439V191H438V206H437V201H436V197H435H434V189H433V181H432V183H431V219H430V196H429H428V192H427V191H426V198H425H424V195H423V207H422V197H421V200H420V195H419V198H418V194H417V197H416V196H415V192H414V194H413V199H412V193H411V206H410V200H409H408V188H407V186H406V208H405V202H404H403V200H402V205H401V188H400V192H399V185H398V216H397V190H396V201H395V196H394V173H393V194H392V190H391V205H390V190H389V198H388V200H387V183H386V202H385V178H384V187H383V192H382V200H381V192H380V189H379V180H378V207H377V206H376V217H375V199H374V196H373V190H372V193H371V199H370V197H369V200H368H367V207H366V183H365V190H364V203H363V199H362V174H361V204H360V200H359V206H358V204H357V207H356V201H355V193H354V204H353V189H352V187H351V195H350V198H349V180H348V191H347V194H346V186H345H344V197H343V205H342V190H341V201H340V195H339V178H338V188H337V198H336V210H335V201H334V190H333V211H332V195H331V204H330V196H329V195H328V205H327V206H326V189H325V197H324V191H323V180H322V215H321V195H320V200H319V196H318V191H317V190H316V192H315V191H314V184H313V203H312V194H311V190H310V194H309V214H308V204H307V191H306V206H305V199H304V194H303V195H302V199H301V194H300V205H299V194H298V195H297V201H296V195H295V199H294V189H293V201H292V183H291V200H290V205H289V203H288V201H287V192H286V186H285V185H284V188H283H282V195H281V192H280V200H279V193H278V191H277V194H276V193H275V191H274V179H273V173H272V178H271V172H270V179H269V172H268V178H267V177H266V197H265V194H264V200H263V201H262V203H261V197H260V196H259V192H258V206H257V201H256V196H255V181H254V190H253V199H252V205H251V201H250V210H249V201H248V199H247V196H246V205H245V216H244V193H243V184H242V200H241V203H240V201H239V200H238V199H237V189H236V204H235V198H234H233H232V193H231V198H230V187H229V188H228V204H227V198H226V201H225V197H224V209H223V212H222V207H221V200H220V197H219V199H218V196H217V203H216V186H215V193H214V208H213V197H212V202H211V196H210V191H209V183H208V200H207V192H206V203H205V197H204V199H203V187H202V182H201V202H200V193H199V196H198V194H197V197H196V188H195V210H194V190H193V192H192V185H191V191H190V207H189V189H188V212H187V208H186V194H185V205H184V204H183V189H182V199H181V198H180H179H178V184H177V195H176V188H175V186H174V197H173V212H172V193H171V178H170V201H169V191H168V195H167V197H166V198H165H164V204H163V182H162V197H161V191H160V213H159V198H158V191H157V193H156V205H155V192H154V199H153V207H152V199H151V202H150V200H149V182H148V187H147V205H146V191H145V186H144V206H143V197H142V194H141V189H140V206H139V201H138V204H137V207H136V192H135V198H134V202H133H132V191H131V196H130V178H129V182H128V189H127V201H126V199H125V206H124V202H123V205H122V192H121V190H120H119V201H118V198H117V193H116V189H115V181H114V203H113V202H112H111V191H110V192H109V193H108V202H107H106V193H105H104V187H103H102V188H101V197H100V200H99V193H98V188H97V197H96V192H95V206H94V186H93V193H92V205H91V213H90V202H89V186H88V195H87V200H86V198H85V196H84V195H83V191H82V192H81H80V202H79V196H78V207H77V197H76V203H75V202H74V193H73V198H72V195H71V189H70V209H69V198H68V206H67V199H66V195H65V186H64V195H63V204H62V195H61V200H60V193H59V205H58V206H57V201H56V190H55V194H54V189H53V190H52V189H51V198H50V199H49V202H48V206H47V196H46V202H45V203H44H43V206H42V199H41V169H40V176H39V173H38V174H37V167H36V162H35V179H34V174H33V164H32V176H31V172H30H29V170H28V171H27V181H26V191H25V195H24V192H23V178H22V166H21V169H20V183H19V180H18V190H17V194H16V187H15V174H14V182H13V188H12V180H11V187H10V172H9V178H8V183H7V170H6V189H5V183H4H3V180H2V177H1V172H0Z" fill="#24a3c8"/><rect x="1006" y="145" width="11" height="1" fill="#24a3c8"/></svg></div>
 <div class="ruler" id="r2"><div class="rl" style="left:19.4px">00:09</div><div class="rl" style="left:59.4px">00:18</div><div class="rl" style="left:99.4px">00:27</div><div class="rl" style="left:139.4px">00:36</div><div class="rl" style="left:179.4px">00:45</div><div class="rl" style="left:219.4px">00:55</div><div class="rl" style="left:259.4px">01:04</div><div class="rl" style="left:299.4px">01:13</div><div class="rl" style="left:339.4px">01:22</div><div class="rl" style="left:379.4px">01:31</div><div class="rl" style="left:419.4px">01:41</div><div class="rl" style="left:459.4px">01:50</div><div class="rl" style="left:499.4px">01:59</div><div class="rl" style="left:539.4px">02:08</div><div class="rl" style="left:579.4px">02:17</div><div class="rl" style="left:619.4px">02:27</div><div class="rl" style="left:659.4px">02:36</div><div class="rl" style="left:699.4px">02:45</div><div class="rl" style="left:739.4px">02:54</div><div class="rl" style="left:779.4px">03:03</div><div class="rl" style="left:819.4px">03:13</div><div class="rl" style="left:859.4px">03:22</div><div class="rl" style="left:899.4px">03:31</div><div class="rl" style="left:939.4px">03:40</div><div class="rl" style="left:979.4px">03:49</div></div>
 <div class="hd" style="left:-1px;top:3px"></div>
 <div class="hd" style="left:1011px;top:3px"></div>
 <div class="hd" style="left:-1px;top:339px"></div>
 <div class="hd" style="left:1011px;top:339px"></div>
</div>
<div id="panelr"></div><div id="panelb"></div>

<!-- bottom panel -->
<div class="lb" style="left:23px;top:433px;letter-spacing:-0.088px">Position</div>
<div class="lb" style="left:23px;top:476px;letter-spacing:-0.000px">Sound duration</div>
<div class="inp" style="left:126px;top:471px">00:03:53.868</div>
<div class="lb" style="left:129px;top:509px;letter-spacing:-0.281px">Begin</div>
<div class="lb" style="left:261px;top:509px;letter-spacing:-0.653px">End</div>
<div class="lb" style="left:393px;top:509px;letter-spacing:-0.029px">Sound duration</div>
<div class="lb" style="left:23px;top:544px;letter-spacing:-0.231px">Selection</div>
<div class="inp" style="left:126px;top:539px">00:00:00.000</div>
<div class="inp" style="left:258px;top:539px">00:00:00.000</div>
<div class="inp" style="left:390px;top:539px">00:00:00.000</div>
<div class="lb" style="left:23px;top:578px;letter-spacing:-0.213px">Visible range</div>
<div class="inp" style="left:126px;top:573px">00:00:00.000</div>
<div class="inp" style="left:258px;top:573px">00:03:53.868</div>
<div class="inp" style="left:390px;top:573px">00:03:53.868</div>
<svg style="left:505px;top:535px" width="30" height="64" viewBox="505 535 30 64" fill="none" stroke-width="1.1">
 <g stroke="#6e6e6e"><circle cx="518" cy="547.4" r="6.8"/><path d="M514.5,547.4 H521.5 M518,543.9 V550.9 M523.4,552.6 L528,556.2"/></g>
 <g stroke="#c6c6c6"><circle cx="518" cy="582.3" r="6.8"/><path d="M514.5,582.3 H521.5 M523.4,587.5 L528,591.1"/></g>
</svg>
<div id="vdiv"></div>
<div class="lb" style="left:609px;top:433px;letter-spacing:-0.298px">Export</div>
<div class="lb" style="left:609px;top:476px;letter-spacing:-0.210px">Export range</div>
<svg style="left:704px;top:473px" width="16" height="16" viewBox="704 473 16 16">
 <defs><radialGradient id="rb" cx=".4" cy=".35" r=".7"><stop offset="0" stop-color="#7fd0f5"/><stop offset=".5" stop-color="#1c78b8"/><stop offset="1" stop-color="#0d3f74"/></radialGradient>
 <linearGradient id="rbg" x1="0" y1="0" x2="1" y2="1"><stop offset="0" stop-color="#d9d9d9"/><stop offset="1" stop-color="#fdfdfd"/></linearGradient></defs>
 <circle cx="711.9" cy="480.9" r="5.5" fill="url(#rbg)" stroke="#6f7780" stroke-width="1"/><circle cx="711.9" cy="480.9" r="4" fill="none" stroke="#cfd3d8" stroke-width="1"/><circle cx="711.9" cy="480.9" r="2.9" fill="url(#rb)"/></svg>
<div class="lb" style="left:725.5px;top:473px;letter-spacing:-0.108px">Full sound</div>
<div class="inp" style="left:825px;top:471px">00:03:53.868</div>
<svg style="left:704px;top:515px" width="16" height="16" viewBox="704 515 16 16"><circle cx="711.8" cy="523.1" r="5.5" fill="#f1f1f1" stroke="#c4c4c4" stroke-width="1"/><circle cx="711.8" cy="523.1" r="4" fill="none" stroke="#e6e6e6" stroke-width="1"/></svg>
<div class="lb" style="left:725.5px;top:515px;color:#383838;letter-spacing:-0.108px">Selection only</div>
<div class="inp" style="left:825px;top:513px;color:#9c9c9c">00:00:00.000</div>
<svg style="left:706px;top:560px" width="13" height="13" viewBox="0 0 13 13"><rect x=".5" y=".5" width="12" height="12" fill="#f4f4f4" stroke="#7e8792"/><rect x="2" y="2" width="9" height="9" fill="#fafafa" stroke="#dcdfe3" stroke-width="1"/><path d="M3.2,6 L5.6,9.6 L9.8,2.8" fill="none" stroke="#26347e" stroke-width="1.7"/></svg>
<div class="lb" style="left:725.5px;top:558px;letter-spacing:-0.196px">Show details</div>
<div id="hdiv"></div>

<!-- transport -->
<svg style="left:300px;top:640px" width="370" height="62" viewBox="300 640 370 62" fill="none">
 <g stroke="#757575" stroke-width="1.1"><circle cx="313.5" cy="675.5" r="7"/><path d="M313.5,671.5 V675.5 H317.6"/></g>
 <g stroke="#d5d5d5" stroke-width="1.6"><circle cx="440.1" cy="673.8" r="22.2"/><circle cx="574" cy="673.8" r="22.3"/>
 <path d="M434,666 H431 V682 H434 M447,666 H450 V682 H447 M437,668 L446.4,674 L437,680 Z" stroke-linejoin="round"/></g>
 <rect x="568.1" y="667" width="13" height="13" rx="1.6" fill="#d5d5d5"/>
 <circle cx="506.9" cy="673.8" r="28" stroke="#979797" stroke-width="1.8"/>
 <path d="M501.6,663.6 L517.6,674 L501.6,684.4 Z" fill="#9b9b9b" stroke="#9b9b9b" stroke-width="3" stroke-linejoin="round"/>
 <circle cx="635.05" cy="674" r="23.05" fill="#72bcd4"/>
 <path d="M634.6,667 H627.1 V680.8 H644.2 V675.9" stroke="#fff" stroke-width="2"/>
 <path d="M647.9,669.8 L641.7,664.2 V667.6 C636.5,667.8 632.3,671 631.1,676.4 C633.8,673.4 637,672.4 641.7,672.4 V675.2 Z" fill="#fff"/>
</svg>
<div class="abs" style="left:326.4px;top:668px;font-size:13.8px;line-height:18px;color:#747474;white-space:pre">00:00.000</div>

<!-- menu -->
<svg style="left:780px;top:60px" width="28" height="20" viewBox="780 60 28 20"><path d="M787.6,76.5 L793.5,65.6 L799.4,76.5 Z" fill="#fff"/></svg>
<div id="menu"></div>
<div class="mi" style="top:94px;letter-spacing:-0.032px">Cut</div>
<div class="mi" style="top:128px;letter-spacing:-0.034px">Copy</div>
<div class="mi" style="top:162px;letter-spacing:-0.097px">Paste in “Append” mode</div>
<div class="mi" style="top:196px;letter-spacing:-0.168px">Paste in “Insert” mode</div>
<div class="mi" style="top:230px;letter-spacing:-0.168px">Paste in “Mix” mode</div>
<div class="sep" style="top:254px"></div>
<div class="mi" style="top:265px;letter-spacing:-0.060px">Delete selected part</div>
<div class="mi" style="top:299px;letter-spacing:-0.067px">Reduce to selected region</div>
<div class="sep" style="top:323px"></div>
<div class="mi on" style="top:334px;letter-spacing:-0.068px">Select all</div>
<div class="mi" style="top:368px;letter-spacing:-0.039px">Cancel selection</div>
<svg style="left:700px;top:86px" width="32" height="304" viewBox="700 86 32 304" class="g">
 <!-- cut -->
 <g stroke="#b4b4b4"><circle cx="710.5" cy="102.4" r="2.15" stroke-width="1.2"/><circle cx="714.5" cy="106.5" r="2.15" stroke-width="1.2"/>
 <path d="M715,104.2 C715.2,100 716.3,96.3 718.8,92.9 C717.9,97 717,100.6 716.6,104.8 Z" fill="#b4b4b4" stroke-width=".5"/>
 <path d="M712.6,101.5 L714.9,101.2 M717.7,100.7 L723.7,98.1" stroke-width="1.4"/></g>
 <!-- copy -->
 <path d="M709.6,129.6 H715.4 L719.3,133.2 V142.3 H709.6 Z M715.4,129.6 V133.2 H719.3 M712.6,129.4 V126.6 H719.8 L722.4,129.5 V140.1 H719.6 M719.8,126.6 V129.5 H722.4" stroke-linejoin="round"/>
 <!-- paste append -->
 <path d="M714.8,174.5 H710.4 Q709.6,174.5 709.6,173.7 V162.5 Q709.6,161.7 710.4,161.7 H711.6 V163.4 H718.4 V161.7 H719.7 Q720.5,161.7 720.5,162.5 V166.8 M713.1,161.5 H716.9 M714.3,160.6 H715.7"/>
 <path d="M717.5,168.6 H720.2 L722.3,170.7 V175.5 Q722.3,176.3 721.5,176.3 H717.5 Q716.7,176.3 716.7,175.5 V169.4 Q716.7,168.6 717.5,168.6 Z M720.2,168.6 V170.7 H722.3 M718.2,172.5 H720.8 M718.2,174.4 H720.8"/>
 <!-- paste insert -->
 <path d="M713.8,209.5 H709.4 Q708.6,209.5 708.6,208.7 V197.4 Q708.6,196.6 709.4,196.6 H710.6 V198.4 H717.4 V196.6 H718.7 Q719.5,196.6 719.5,197.4 V201.8 M712.1,196.4 H715.9 M713.3,195.5 H714.7"/>
 <path d="M722.5,202.3 L715.6,208.4 M715.4,205 V208.6 H718.8"/>
 <!-- paste mix -->
 <path d="M714.8,243.5 H710.4 Q709.6,243.5 709.6,242.7 V231.6 Q709.6,230.8 710.4,230.8 H711.6 V232.5 H718.4 V230.8 H719.7 Q720.5,230.8 720.5,231.6 V235.8 M713.1,230.5 H716.9 M714.3,229.6 H715.7"/>
 <path d="M716.5,237.2 V238.8 M716.5,240 V241 M716.5,242.1 V243.9 M719.4,237 V238 M719.4,239 V240 M719.4,241.1 V243.9 M722.5,237.2 V239.8 M722.5,241 V242 M722.5,243 V244" stroke-width="1"/>
 <!-- delete -->
 <g stroke-dasharray="4 2" stroke-width="1" shape-rendering="crispEdges"><path d="M707,263.5 H723"/><path d="M724.5,263 V279"/><path d="M725,280.5 H709"/><path d="M707.5,281 V265"/></g>
 <path d="M712.3,268.3 L719.7,275.7 M719.7,268.3 L712.3,275.7" stroke-width=".8"/>
 <!-- reduce -->
 <g stroke-dasharray="4 2" stroke-width="1" shape-rendering="crispEdges"><path d="M707,297.5 H723"/><path d="M724.5,297 V313"/><path d="M725,314.5 H709"/><path d="M707.5,315 V299"/></g>
 <path d="M711,305.5 H721" stroke-width="1"/>
 <!-- select all -->
 <g stroke="#666" stroke-dasharray="4 2" stroke-width="1" shape-rendering="crispEdges"><path d="M707,332.5 H723"/><path d="M724.5,332 V348"/><path d="M725,349.5 H709"/><path d="M707.5,350 V334"/></g>
 <path d="M711.2,340.6 L714.5,344 L720.8,337.4" stroke="#666" stroke-width="1.3"/>
 <!-- cancel -->
 <path d="M707.5,381.6 V373.2 Q707.5,372.4 708.3,372.4 H714.8"/>
 <rect x="710.8" y="375.7" width="6.5" height="7.5" rx=".8"/>
 <path d="M712.5,368.4 C717.5,368.6 721.3,371.5 721.5,377"/>
 <path d="M710,368.4 L714,366.2 V370.6 Z M721.5,379.8 L719.2,375.5 H723.8 Z" fill="#bdbdbd" stroke="none"/>
</svg>
</div>
<div id="edge"></div>
</body></html>
